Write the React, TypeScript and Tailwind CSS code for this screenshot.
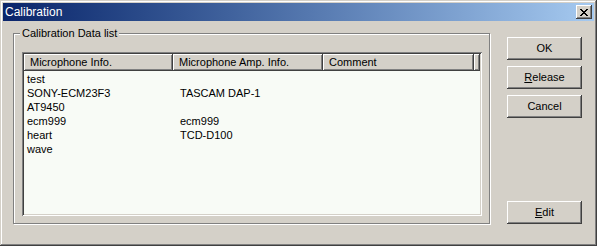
const raised =
  "shadow-[inset_-1px_-1px_#404040,inset_1px_1px_#ffffff,inset_-2px_-2px_#808080,inset_2px_2px_#d4d0c8]";

const rows = [
  { mic: "test", amp: "", comment: "" },
  { mic: "SONY-ECM23F3", amp: "TASCAM DAP-1", comment: "" },
  { mic: "AT9450", amp: "", comment: "" },
  { mic: "ecm999", amp: "ecm999", comment: "" },
  { mic: "heart", amp: "TCD-D100", comment: "" },
  { mic: "wave", amp: "", comment: "" },
];

function Button({ label, hotkey }: { label: string; hotkey?: number }) {
  return (
    <button
      className={`w-[75px] h-[23px] bg-[#d4d0c8] text-[11px] text-black flex items-center justify-center ${raised}`}
    >
      {hotkey === undefined ? (
        label
      ) : (
        <span>
          {label.slice(0, hotkey)}
          <span className="underline">{label[hotkey]}</span>
          {label.slice(hotkey + 1)}
        </span>
      )}
    </button>
  );
}

function HeaderCell({ text, w }: { text: string; w: string }) {
  return (
    <div className={`${w} h-full pl-[6px] flex items-center ${raised}`}>
      {text}
    </div>
  );
}

export default function App() {
  return (
    <div
      className="w-[597px] h-[246px] bg-[#d4d0c8] p-[3px] flex flex-col shadow-[inset_-1px_-1px_#404040,inset_1px_1px_#d4d0c8,inset_-2px_-2px_#808080,inset_2px_2px_#ffffff] text-black"
      style={{ fontFamily: '"Liberation Sans", Arial, sans-serif' }}
    >
      {/* title bar */}
      <div className="h-[18px] flex items-center pl-[2px] pr-[2px] bg-gradient-to-r from-[#0a246a] to-[#a6caf0]">
        <span className="text-white text-[12px] leading-none">Calibration</span>
        <div className={`ml-auto w-[16px] h-[14px] bg-[#d4d0c8] flex items-center justify-center ${raised}`}>
          <svg width="8" height="7" viewBox="0 0 8 7" shapeRendering="crispEdges">
            <path
              d="M0 0h2v1h-2zM6 0h2v1h-2zM1 1h2v1h-2zM5 1h2v1h-2zM2 2h4v1h-4zM3 3h2v1h-2zM2 4h4v1h-4zM1 5h2v1h-2zM5 5h2v1h-2zM0 6h2v1h-2zM6 6h2v1h-2z"
              fill="#000"
            />
          </svg>
        </div>
      </div>

      <div className="flex pl-[10px] pr-[12px] pt-[12px] text-[11px]">
        {/* group box */}
        <div className="relative w-[477px] h-[191px] border border-[#808080] shadow-[1px_1px_0_#ffffff,inset_1px_1px_0_#ffffff] pt-[18px] pl-[8px] pr-[7px] pb-[7px]">
          <span className="absolute -top-[8px] left-[6px] px-[2px] bg-[#d4d0c8] leading-[14px]">
            Calibration Data list
          </span>
          <div className="h-full bg-[#f8fbf6] p-[2px] shadow-[inset_1px_1px_#808080,inset_-1px_-1px_#ffffff,inset_2px_2px_#404040,inset_-2px_-2px_#d4d0c8]">
            <div className="h-[17px] flex bg-[#d4d0c8]">
              <HeaderCell text="Microphone Info." w="w-[149px]" />
              <HeaderCell text="Microphone Amp. Info." w="w-[150px]" />
              <HeaderCell text="Comment" w="w-[151px]" />
              <div className={`flex-1 h-full ${raised}`} />
            </div>
            <div className="pt-[1px]">
              {rows.map((r) => (
                <div key={r.mic} className="h-[14px] flex items-center leading-[14px]">
                  <div className="w-[149px] pl-[3px]">{r.mic}</div>
                  <div className="w-[150px] pl-[7px]">{r.amp}</div>
                  <div className="w-[151px] pl-[6px]">{r.comment}</div>
                </div>
              ))}
            </div>
          </div>
        </div>

        {/* buttons */}
        <div className="ml-[17px] h-[191px] pt-[4px] flex flex-col gap-[6px]">
          <Button label="OK" />
          <Button label="Release" hotkey={0} />
          <Button label="Cancel" />
          <div className="mt-auto">
            <Button label="Edit" hotkey={0} />
          </div>
        </div>
      </div>
    </div>
  );
}
